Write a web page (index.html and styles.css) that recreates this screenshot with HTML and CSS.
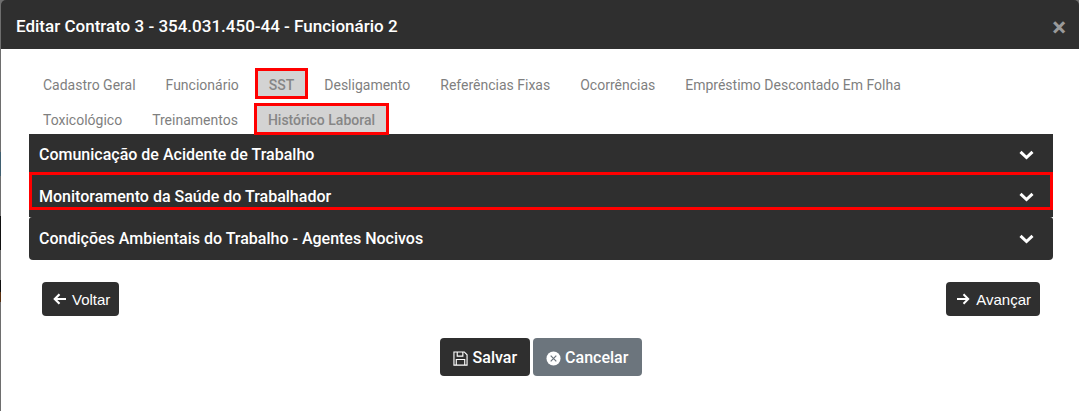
FILE: index.html
```html
<!DOCTYPE html>
<html lang="pt-BR">
<head>
<meta charset="utf-8">
<title>Editar Contrato</title>
<link rel="stylesheet" href="styles.css">
</head>
<body>
<div class="modal">
  <header class="modal-head">
    <h1 class="modal-title">Editar Contrato 3 - 354.031.450-44 - Funcionário 2</h1>
    <span class="modal-close">×</span>
  </header>
  <main class="modal-body">
    <nav class="tabs">
      <div class="tab-row tab-row-first">
        <a class="tab">Cadastro Geral</a>
        <a class="tab">Funcionário</a>
        <a class="tab tab-active">SST</a>
        <a class="tab">Desligamento</a>
        <a class="tab">Referências Fixas</a>
        <a class="tab">Ocorrências</a>
        <a class="tab">Empréstimo Descontado Em Folha</a>
      </div>
      <div class="tab-row tab-row-second">
        <a class="tab">Toxicológico</a>
        <a class="tab">Treinamentos</a>
        <a class="tab tab-active">Histórico Laboral</a>
      </div>
    </nav>
    <section class="accordion">
      <div class="acc-row acc-first"><span>Comunicação de Acidente de Trabalho</span>
        <svg class="chev" viewBox="0 0 15 10"><path d="M1.500 1.800l6 5.700 6-5.700" fill="none" stroke="#fff" stroke-width="3"/></svg></div>
      <div class="acc-row acc-second"><span>Monitoramento da Saúde do Trabalhador</span>
        <svg class="chev" viewBox="0 0 15 10"><path d="M1.500 1.800l6 5.700 6-5.700" fill="none" stroke="#fff" stroke-width="3"/></svg></div>
      <div class="acc-row acc-third"><span>Condições Ambientais do Trabalho - Agentes Nocivos</span>
        <svg class="chev" viewBox="0 0 15 10"><path d="M1.500 1.800l6 5.700 6-5.700" fill="none" stroke="#fff" stroke-width="3"/></svg></div>
      <div class="acc-mark"></div>
    </section>
    <div class="steps">
      <button class="btn-step"><svg class="arrow" viewBox="0 0 13 12"><path d="M13 6H2M6.500 1.300L1.800 6l4.700 4.700" fill="none" stroke="#fff" stroke-width="2.200"/></svg>Voltar</button>
      <button class="btn-step"><svg class="arrow" viewBox="0 0 13 12"><path d="M0 6h11M6.500 1.300L11.200 6l-4.700 4.700" fill="none" stroke="#fff" stroke-width="2"/></svg>Avançar</button>
    </div>
    <div class="actions">
      <button class="btn-main btn-save"><svg class="ico" viewBox="0 0 16 16"><path d="M1 1h11l3 3v11H1zM4.500 1v4.500h6V1M3.500 15V9h9v6" fill="none" stroke="#fff" stroke-width="1.200"/></svg>Salvar</button>
      <button class="btn-main btn-cancel"><svg class="ico" viewBox="0 0 16 16"><circle cx="8" cy="8" r="7.500" fill="#fff"/><path d="M5 5l6 6M11 5l-6 6" stroke="#6c757d" stroke-width="1.300"/></svg>Cancelar</button>
    </div>
  </main>
</div>
</body>
</html>
```
FILE: styles.css
```css
* { box-sizing: border-box; }
html, body { margin: 0; height: 100%; overflow: hidden; }
body {
  font-family: Roboto, "Liberation Sans", sans-serif;
  padding-left: 1px;
  background: linear-gradient(to bottom,
    #6e6e6e 0 152px, #3f5f70 152px 176px, #6e6e6e 176px 216px, #111 216px 250px,
    #6e6e6e 250px 280px, #111 280px 292px, #5a3010 292px 302px, #6e6e6e 302px);
}
.modal { width: 100%; height: 411px; }
.modal-head {
  height: 49px; background: #2f2f2f; color: #fff;
  display: flex; align-items: center; justify-content: space-between;
  padding: 0 13px 0 15px;
  border-radius: 5px 5px 0 0;
}
.modal-title { margin: 3px 0 0; font-size: 17px; line-height: 24px; font-weight: 500; }
.modal-close { color: #9a9a9a; font-size: 26px; font-weight: 700; line-height: 24px; margin-top: 5px; }
.modal-body { height: 362px; background: #fff; padding: 19px 26px 0 28px; }
.tabs { margin-left: -1px; }
.tab-row { display: flex; }
.tab-row-first { height: 35px; }
.tab-row-second { height: 31px; }
.tab { font-size: 14px; line-height: 21px; padding: 7px 15px 0; color: #7f7f7f; height: 31px; }
.tab-active {
  background: #d3d3d3; color: #868686; font-weight: 500; padding: 7px 14px 0; margin: 0 1px;
  outline: 3px solid #f00; outline-offset: -3px;
  position: relative; z-index: 1;
}
.tab-row-second .tab-active { height: 32px; }
.accordion { position: relative; }
.acc-row { background: #2f2f2f; padding: 0 19px 0 10px; display: flex; align-items: center; justify-content: space-between; color: #fff; font-size: 16px; font-weight: 500; }
.acc-first { height: 42px; padding-bottom: 1px; }
.acc-second { height: 41px; }
.acc-third { height: 43px; border-radius: 3px 3px 4px 4px; }
.acc-mark { position: absolute; top: 38px; left: 0; right: 0; height: 38px; border: 3px solid #f00; }
.chev { width: 15px; height: 10px; }
.steps { display: flex; justify-content: space-between; padding: 22px 13px 0; }
button { font-family: inherit; border: 0; cursor: pointer; color: #fff; }
.btn-step { height: 34px; padding: 0 9px 0 11px; background: #2f2f2f; border-radius: 4px; font-family: "Liberation Sans", sans-serif; font-size: 15px; display: flex; align-items: center; gap: 6px; }
.arrow { width: 13px; height: 12px; }
.actions { display: flex; justify-content: center; gap: 3px; margin-top: 22px; }
.btn-main { height: 38px; padding: 0 13px; border-radius: 4px; font-size: 16px; font-weight: 500; display: flex; align-items: center; gap: 4px; }
.btn-save { background: #2f2f2f; gap: 5px; }
.btn-cancel { background: #6c757d; padding-right: 14px; }
.ico { width: 15px; height: 15px; margin-top: 3px; }
```
